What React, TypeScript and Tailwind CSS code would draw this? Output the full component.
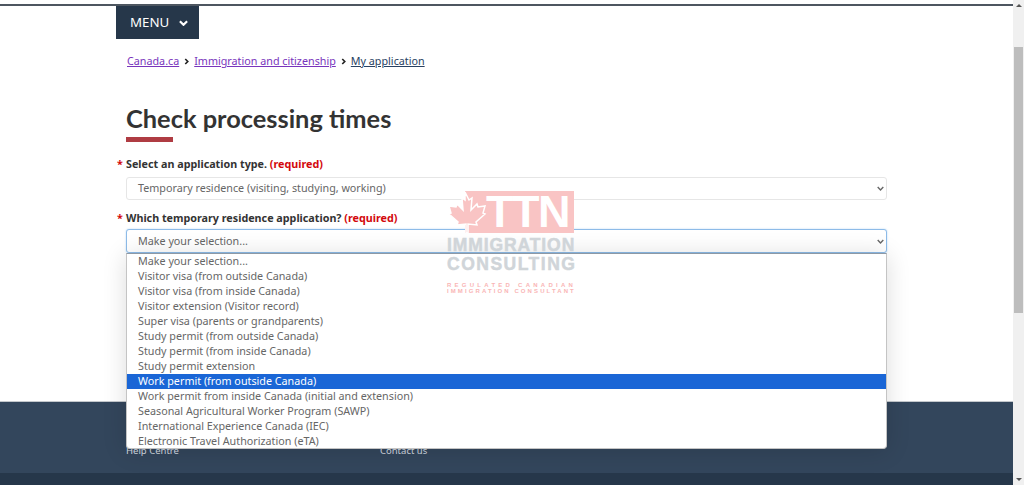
import React from "react";

const options = [
  "Make your selection...",
  "Visitor visa (from outside Canada)",
  "Visitor visa (from inside Canada)",
  "Visitor extension (Visitor record)",
  "Super visa (parents or grandparents)",
  "Study permit (from outside Canada)",
  "Study permit (from inside Canada)",
  "Study permit extension",
  "Work permit (from outside Canada)",
  "Work permit from inside Canada (initial and extension)",
  "Seasonal Agricultural Worker Program (SAWP)",
  "International Experience Canada (IEC)",
  "Electronic Travel Authorization (eTA)",
];

function Chevron({ className, width = 2 }: { className: string; width?: number }) {
  return (
    <svg viewBox="0 0 10 6" className={className} fill="none" stroke="currentColor" strokeWidth={width}>
      <path d="M1 1l4 4 4-4" />
    </svg>
  );
}

function Crumb({ className }: { className: string }) {
  return (
    <svg viewBox="0 0 6 8" className={className} fill="none" stroke="currentColor" strokeWidth="2">
      <path d="M1.5 1l3 3-3 3" />
    </svg>
  );
}

function Label({ text }: { text: string }) {
  return (
    <div className="relative text-[10.75px] leading-[16px] font-bold text-[#333]">
      <span className="absolute left-[-9px] top-0 text-[#d3080c]">*</span>
      {text} <span className="text-[#d3080c]">(required)</span>
    </div>
  );
}

function Select({ focused }: { focused?: boolean }) {
  return (
    <div
      className={
        focused
          ? "flex h-[24px] w-[761px] items-center justify-between rounded-[3px] border border-[#8dbbe8] bg-white pl-[11px] pr-[2px] text-[10.75px] text-[#666] shadow-[0_0_2px_#b5d6f2]"
          : "flex h-[23px] w-[761px] items-center justify-between rounded-[3px] border border-[#e6e6e6] bg-white pl-[11px] pr-[2px] text-[10.75px] text-[#666]"
      }
    >
      <span>{focused ? "Make your selection..." : "Temporary residence (visiting, studying, working)"}</span>
      <Chevron className="h-[5px] w-[7px] text-[#666]" />
    </div>
  );
}

export default function App() {
  return (
    <div className="relative flex h-[485px] w-[1024px] overflow-hidden bg-white font-['Noto_Sans',sans-serif]">
      <div className="flex h-full w-[1013px] flex-col">
        <div className="mt-[4px] h-[2px] bg-[#4d5660]" />
        <div className="flex-1 pl-[116px]">
          <div className="flex h-[33px] w-[83px] items-center gap-[10px] bg-[#26374a] pl-[14px] text-[13.3px] text-white">
            <span>MENU</span>
            <Chevron className="h-[6px] w-[9px]" width={2.4} />
          </div>
          <nav className="mt-[14px] flex items-center pl-[11px] text-[10.75px] leading-[16px]">
            <span className="text-[#7834bc] underline">Canada.ca</span>
            <Crumb className="mx-[5px] h-[7px] w-[5px] text-[#222]" />
            <span className="text-[#7834bc] underline">Immigration and citizenship</span>
            <Crumb className="mx-[5px] h-[7px] w-[5px] text-[#222]" />
            <span className="text-[#284162] underline">My application</span>
          </nav>
          <div className="pl-[10px]">
            <h1 className="mt-[32px] font-['Lato',sans-serif] text-[25.4px] font-bold leading-[34px] text-[#333]">
              Check processing times
            </h1>
            <div className="mt-[2px] h-[5px] w-[47px] bg-[#af3c43]" />
            <div className="mt-[14px]">
              <Label text="Select an application type." />
            </div>
            <div className="mt-[5px]">
              <Select />
            </div>
            <div className="mt-[10px]">
              <Label text="Which temporary residence application?" />
            </div>
            <div className="mt-[3px]">
              <Select focused />
            </div>
          </div>
        </div>
        <footer className="flex h-[84px] flex-col justify-end border-t border-[#c4c8cc] bg-[#33465c]">
          <div className="flex h-[29px] pl-[126px] text-[9.5px] leading-[14px] text-[#d5dbe0]">
            <span className="w-[254px]">Help Centre</span>
            <span>Contact us</span>
          </div>
          <div className="h-[12px] bg-[#26374a]" />
        </footer>
      </div>

      <div className="flex h-full w-[11px] flex-col items-center bg-[#f0f0f0]">
        <div className="mt-[4px] h-0 w-0 border-x-[3px] border-b-[3px] border-x-transparent border-b-[#555]" />
        <div className="mt-[40px] h-[266px] w-[9px] bg-[#bdbdbd]" />
        <div className="flex-1" />
        <div className="mb-[4px] h-0 w-0 border-x-[3px] border-t-[3px] border-x-transparent border-t-[#555]" />
      </div>

      <ul className="absolute left-[126px] top-[253px] h-[196px] w-[761px] overflow-hidden rounded-b-[4px] border border-[#c4c4c4] border-t-[#8d99a5] bg-white text-[10.75px] leading-[15px] text-[#666] shadow-[0_2px_24px_rgba(0,0,0,0.14)]">
        {options.map((o, i) => (
          <li key={o} className={i === 8 ? "h-[15px] bg-[#1a66d6] pl-[11px] text-white" : "h-[15px] pl-[11px]"}>
            {o}
          </li>
        ))}
      </ul>

      <div className="absolute left-[447px] top-[191px] w-[130px]">
        <div className="relative h-[42px]">
          <div className="absolute left-[18px] top-0 flex h-[42px] w-[109px] items-center justify-end bg-[#f9c4c4] pr-[5px] font-['Liberation_Sans',sans-serif] text-[45px] font-bold leading-[42px] tracking-[-1.5px] text-white">
            TTN
          </div>
          <svg viewBox="0 0 40 42" className="absolute left-0 top-0 h-[42px] w-[40px] text-[#f9c4c4]" fill="currentColor" stroke="#ffffff" strokeWidth="1.5">
            <path d="M18 1l4 8 3-2-1 12 6-6 1 3 7-1-2 7 2 1-9 8 1 3-9-1v9h-2v-9l-9 1 1-3-9-8 2-1-2-7 7 1 1-3 6 6-1-12 3 2z" />
          </svg>
        </div>
        <div className="mt-[3px] whitespace-nowrap font-['Liberation_Sans',sans-serif] text-[17.5px] font-bold leading-[19px] tracking-[0.9px] text-[#d0d5d9] [-webkit-text-stroke:0.5px_#d0d5d9]">
          IMMIGRATION
        </div>
        <div className="whitespace-nowrap font-['Liberation_Sans',sans-serif] text-[17.5px] font-bold leading-[19px] tracking-[1.5px] text-[#d0d5d9] [-webkit-text-stroke:0.5px_#d0d5d9]">
          CONSULTING
        </div>
        <div className="mt-[8px] whitespace-nowrap font-['Liberation_Sans',sans-serif] text-[6px] font-bold leading-[6px] tracking-[3.25px] text-[#f9b5b5]">
          REGULATED CANADIAN
        </div>
        <div className="whitespace-nowrap font-['Liberation_Sans',sans-serif] text-[6px] font-bold leading-[6px] tracking-[2.1px] text-[#f9b5b5]">
          IMMIGRATION CONSULTANT
        </div>
      </div>
    </div>
  );
}
